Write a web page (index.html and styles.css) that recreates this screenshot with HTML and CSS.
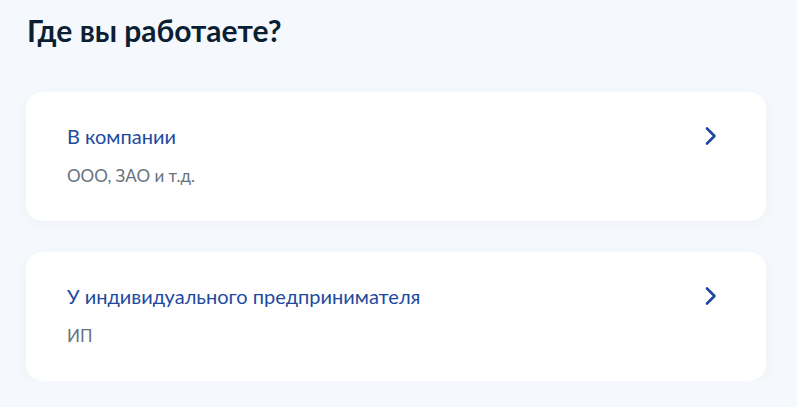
FILE: index.html
```html
<!DOCTYPE html>
<html lang="ru">
<head>
    <meta charset="UTF-8">
    <meta name="viewport" content="width=device-width, initial-scale=1.0">
    <title>Где вы работаете?</title>
    <link rel="stylesheet" href="styles.css">
</head>
<body>
    <div class="page">
        <h1 class="title">Где вы работаете?</h1>
        <div class="options">
            <a class="option" href="#">
                <div class="option-text">
                    <div class="option-name">В компании</div>
                    <div class="option-hint">ООО, ЗАО и т.д.</div>
                </div>
                <svg class="chevron" width="14" height="20" viewBox="0 0 14 20">
                    <path d="M3 2.5l7.5 7.5-7.5 7.5" fill="none" stroke="#1d4aa0" stroke-width="2.6" stroke-linecap="round" stroke-linejoin="round"/>
                </svg>
            </a>
            <a class="option" href="#">
                <div class="option-text">
                    <div class="option-name">У индивидуального предпринимателя</div>
                    <div class="option-hint">ИП</div>
                </div>
                <svg class="chevron" width="14" height="20" viewBox="0 0 14 20">
                    <path d="M3 2.5l7.5 7.5-7.5 7.5" fill="none" stroke="#1d4aa0" stroke-width="2.6" stroke-linecap="round" stroke-linejoin="round"/>
                </svg>
            </a>
        </div>
    </div>
</body>
</html>
```

FILE: styles.css
```css
body {
    margin: 0;
    padding: 0;
    background: #f5f8fc;
    font-family: Lato, "Noto Sans", sans-serif;
}

.page {
    padding: 11px 31px 0 26px;
}

.title {
    margin: 0 0 0 1px;
    font-size: 30px;
    font-weight: 700;
    line-height: 38px;
    color: #0b1f33;
}

.options {
    display: flex;
    flex-direction: column;
    gap: 31px;
    margin-top: 43px;
}

.option {
    display: flex;
    align-items: flex-start;
    justify-content: space-between;
    padding: 31px 48px 0 41px;
    height: 98px;
    background: #ffffff;
    border-radius: 16px;
    box-shadow: 0 2px 12px rgba(11, 31, 51, 0.04);
    text-decoration: none;
}

.option-name {
    font-size: 20px;
    line-height: 26px;
    color: #1d4aa0;
}

.option-hint {
    margin-top: 16px;
    font-size: 17px;
    line-height: 22px;
    color: #66727f;
}

.chevron {
    margin-top: 3px;
}
```
